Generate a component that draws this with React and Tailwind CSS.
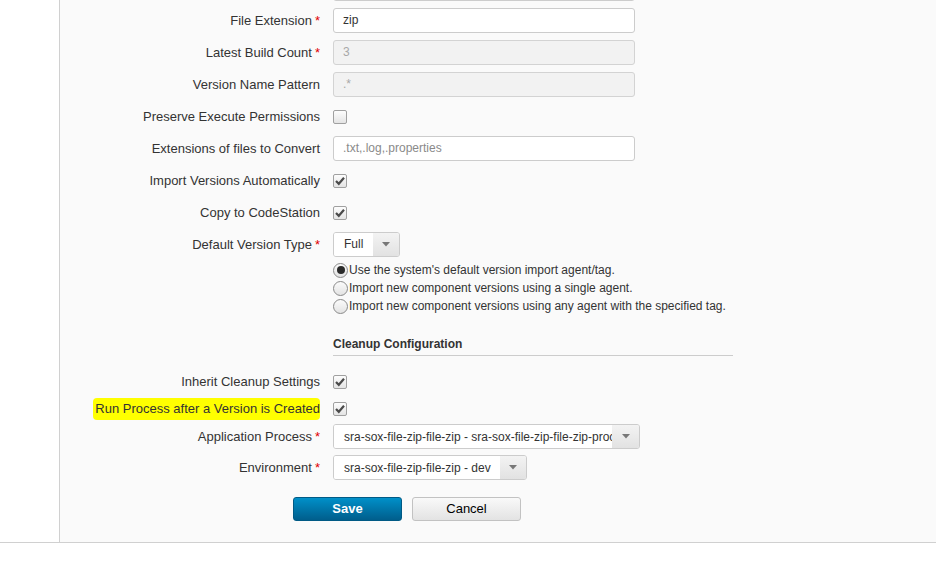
import React from "react";

const FONT = "font-['Liberation_Sans',Arial,sans-serif]";

function Label({ children, req, highlight }) {
  return (
    <div className="w-[260px] shrink-0 text-right text-[13px] leading-[15px] text-[#333]">
      {highlight ? (
        <span className="bg-[#ffff00] pt-[3px] pb-[4px] pl-[2px] rounded-[4px]">{children}</span>
      ) : (
        children
      )}
      {req && <span className="ml-[3px] text-[#e00000]">*</span>}
    </div>
  );
}

function Row({ label, req, highlight, h = "h-[32px]", children }) {
  return (
    <div className={`flex items-center ${h}`}>
      <Label req={req} highlight={highlight}>
        {label}
      </Label>
      <div className="ml-[13px] flex items-center">{children}</div>
    </div>
  );
}

function TextInput({ value, placeholder, disabled }) {
  return (
    <div
      className={`w-[302px] h-[25px] rounded-[3px] border px-[9px] flex items-center text-[12px] ${
        disabled
          ? "bg-[#f2f2f2] border-[#d3d3d3] text-[#a8a8a8]"
          : "bg-white border-[#cccccc] text-[#333]"
      }`}
    >
      {value ? (
        <span>{value}</span>
      ) : placeholder ? (
        <span className="text-[#8a8a8a]">{placeholder}</span>
      ) : null}
    </div>
  );
}

function Checkbox({ checked }) {
  return (
    <div className="w-[14px] h-[14px] mt-[2px] rounded-[2px] border border-[#a0a0a0] bg-linear-to-b from-[#fdfdfd] to-[#e4e4e4] flex items-center justify-center">
      {checked && (
        <svg width="12" height="12" viewBox="0 0 12 12">
          <path d="M2 6 L4.8 8.8 L10 2.8" fill="none" stroke="#4a4a4a" strokeWidth="2.2" />
        </svg>
      )}
    </div>
  );
}

function Select({ width, text, arrow = 26 }) {
  return (
    <div
      className="h-[25px] flex rounded-[3px] border border-[#cccccc] overflow-hidden text-[12px] text-[#333]"
      style={{ width }}
    >
      <div className="flex-1 min-w-0 bg-white pl-[10px] flex items-center whitespace-nowrap overflow-hidden">
        {text}
      </div>
      <div
        className="shrink-0 bg-linear-to-b from-[#f3f3f3] to-[#e2e2e2] flex items-center justify-center"
        style={{ width: arrow }}
      >
        <svg width="8" height="5" viewBox="0 0 8 5">
          <path d="M0 0 L8 0 L4 4.5 Z" fill="#777" />
        </svg>
      </div>
    </div>
  );
}

function Radio({ checked, children }) {
  return (
    <div className="flex items-center h-[18px] text-[12px] text-[#333]">
      <div className="w-[15px] h-[15px] rounded-full border border-[#8a8a8a] bg-linear-to-b from-[#fbfbfb] to-[#e3e3e3] flex items-center justify-center">
        {checked && <div className="w-[8px] h-[8px] rounded-full bg-[#2a2a2a]" />}
      </div>
      <span className="ml-[1px]">{children}</span>
    </div>
  );
}

export default function App() {
  return (
    <div className={`w-full h-[577px] bg-white ${FONT}`}>
      <div className="flex h-[543px] border-b border-[#d0d0d0]">
        <div className="w-[59px] shrink-0 bg-white" />
        <div className="flex-1 border-l border-[#d0d0d0] bg-[#fafafa] overflow-hidden">
          <div className="mt-[-28px]">
            <Row label="">
              <TextInput value="" />
            </Row>
            <Row label="File Extension" req>
              <TextInput value="zip" />
            </Row>
            <Row label="Latest Build Count" req>
              <TextInput value="3" disabled />
            </Row>
            <Row label="Version Name Pattern">
              <TextInput value=".*" disabled />
            </Row>
            <Row label="Preserve Execute Permissions">
              <Checkbox />
            </Row>
            <Row label="Extensions of files to Convert">
              <TextInput placeholder=".txt,.log,.properties" />
            </Row>
            <Row label="Import Versions Automatically">
              <Checkbox checked />
            </Row>
            <Row label="Copy to CodeStation">
              <Checkbox checked />
            </Row>
            <Row label="Default Version Type" req>
              <Select width={67} text="Full" arrow={26} />
            </Row>
            <div className="pl-[273px] pt-[1px]">
              <Radio checked>Use the system's default version import agent/tag.</Radio>
              <Radio>Import new component versions using a single agent.</Radio>
              <Radio>Import new component versions using any agent with the specified tag.</Radio>
            </div>
            <div className="pl-[273px] h-[41px] flex items-end">
              <div className="w-[400px] border-b border-[#cccccc] pb-[3px] text-[12px] leading-[15px] font-bold text-[#333]">
                Cleanup Configuration
              </div>
            </div>
            <div className="mt-[11px]">
              <Row label="Inherit Cleanup Settings" h="h-[28px]">
                <Checkbox checked />
              </Row>
              <Row label="Run Process after a Version is Created" highlight h="h-[26px]">
                <Checkbox checked />
              </Row>
              <Row label="Application Process" req h="h-[31px]">
                <Select
                  width={307}
                  text="sra-sox-file-zip-file-zip - sra-sox-file-zip-file-zip-process"
                  arrow={27}
                />
              </Row>
              <Row label="Environment" req h="h-[31px]">
                <Select width={194} text="sra-sox-file-zip-file-zip - dev" arrow={26} />
              </Row>
            </div>
            <div className="mt-[14px] pl-[233px] flex gap-[10px]">
              <button className="w-[109px] h-[24px] rounded-[3px] border border-[#005a85] bg-linear-to-b from-[#0090c9] to-[#005e8c] text-white font-bold text-[13px]">
                Save
              </button>
              <button className="w-[109px] h-[24px] rounded-[3px] border border-[#c2c2c2] bg-linear-to-b from-[#f9f9f9] to-[#e3e3e3] text-black text-[13px]">
                Cancel
              </button>
            </div>
          </div>
        </div>
      </div>
    </div>
  );
}
